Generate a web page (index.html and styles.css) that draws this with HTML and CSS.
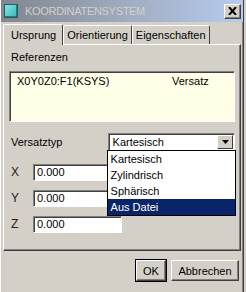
FILE: index.html
```html
<!DOCTYPE html>
<html lang="de">
<head>
    <meta charset="UTF-8">
    <title>Koordinatensystem</title>
    <link rel="stylesheet" href="styles.css">
</head>
<body>
    <div class="window">
        <div class="titlebar">
            <span class="app-icon"></span>
            <span class="title">KOORDINATENSYSTEM</span>
            <button class="close-btn">
                <svg width="9" height="8" viewBox="0 0 9 8"><path d="M1 0 L8 8 M8 0 L1 8" stroke="#000" stroke-width="2"/></svg>
            </button>
        </div>

        <div class="tabs">
            <div class="tab active">Ursprung</div>
            <div class="tab">Orientierung</div>
            <div class="tab">Eigenschaften</div>
        </div>

        <div class="panel">
            <div class="label">Referenzen</div>
            <div class="listbox">
                <div class="list-row">
                    <span class="ref-name">X0Y0Z0:F1(KSYS)</span>
                    <span class="ref-type">Versatz</span>
                </div>
            </div>

            <div class="row type-row">
                <span class="type-label">Versatztyp</span>
                <div class="combo">
                    <span class="combo-value">Kartesisch</span>
                    <span class="combo-btn">
                        <svg width="7" height="4" viewBox="0 0 7 4"><path d="M0 0 H7 L3.5 4 Z" fill="#000"/></svg>
                    </span>
                    <ul class="combo-list">
                        <li>Kartesisch</li>
                        <li>Zylindrisch</li>
                        <li>Sphärisch</li>
                        <li class="selected">Aus Datei</li>
                    </ul>
                </div>
            </div>

            <div class="coords">
                <div class="row coord-row">
                    <span class="axis">X</span>
                    <div class="field">0.000</div>
                </div>
                <div class="row coord-row">
                    <span class="axis">Y</span>
                    <div class="field">0.000</div>
                </div>
                <div class="row coord-row">
                    <span class="axis">Z</span>
                    <div class="field">0.000</div>
                </div>
            </div>
        </div>

        <div class="buttons">
            <button class="btn ok-btn">OK</button>
            <button class="btn cancel-btn">Abbrechen</button>
        </div>
    </div>
</body>
</html>
```

FILE: styles.css
```css
body {
    margin: 0;
    padding: 0;
    background: #d4d0c8;
    font-family: "Liberation Sans", Arial, sans-serif;
    font-size: 11px;
    color: #000;
}

.window {
    width: 242px;
    height: 292px;
    background: #d4d0c8;
    border-left: 1px solid #fff;
    border-right: 1px solid #404040;
    box-shadow: inset -1px 0 0 #808080;
    overflow: hidden;
}

.titlebar {
    height: 22px;
    display: flex;
    align-items: center;
    padding: 0 2px 0 3px;
    background: linear-gradient(to right, #80868f, #9eabbf 50%, #b8cbee);
}

.app-icon {
    width: 12px;
    height: 12px;
    background: linear-gradient(135deg, #7fe8e8, #3cb4b8);
    border: 1px solid #2a5a60;
    box-shadow: inset -1px -1px 0 #1f7d80;
}

.title {
    flex: 1;
    margin-left: 7px;
    color: #d4d0c8;
    font-size: 11px;
    letter-spacing: -0.3px;
}

.close-btn {
    width: 17px;
    height: 15px;
    padding: 0;
    border: 1px solid;
    border-color: #fff #404040 #404040 #fff;
    box-shadow: inset -1px -1px 0 #808080;
    background: #d4d0c8;
    display: flex;
    align-items: center;
    justify-content: center;
}

.tabs {
    display: flex;
    align-items: flex-end;
    height: 22px;
    padding-left: 2px;
}

.tab {
    height: 18px;
    line-height: 18px;
    padding: 0 3px;
    border: 1px solid;
    border-bottom: none;
    border-color: #fff #404040 transparent #fff;
    border-radius: 2px 2px 0 0;
}

.tab.active {
    height: 20px;
    line-height: 20px;
    padding: 0 6px 0 7px;
    position: relative;
    top: 1px;
    background: #d4d0c8;
    z-index: 1;
}

.panel {
    height: 199px;
    margin: 0 2px;
    padding: 6px 5px 0 5px;
    border: 1px solid;
    border-color: #fff #404040 #404040 #fff;
    box-shadow: inset -1px -1px 0 #808080;
}

.label {
    padding-left: 2px;
    height: 20px;
}

.listbox {
    height: 49px;
    background: #ffffe7;
    border: 1px solid;
    border-color: #808080 #fff #fff #808080;
    box-shadow: inset 1px 1px 0 #404040;
}

.list-row {
    display: flex;
    padding: 3px 0 0 7px;
}

.ref-name {
    width: 155px;
}

.row {
    display: flex;
    align-items: center;
}

.type-row {
    margin-top: 11px;
    height: 18px;
}

.type-label {
    width: 97px;
    padding-left: 2px;
}

.combo {
    position: relative;
    width: 126px;
    height: 16px;
    display: flex;
    align-items: center;
    background: #fff;
    border: 1px solid;
    border-color: #808080 #fff #fff #808080;
    box-shadow: inset 1px 1px 0 #404040;
}

.combo-value {
    flex: 1;
    padding-left: 4px;
}

.combo-btn {
    width: 14px;
    height: 12px;
    margin-right: 1px;
    background: #d4d0c8;
    border: 1px solid;
    border-color: #fff #404040 #404040 #fff;
    display: flex;
    align-items: center;
    justify-content: center;
}

.combo-list {
    position: absolute;
    top: 16px;
    left: -2px;
    width: 127px;
    margin: 0;
    padding: 0;
    list-style: none;
    background: #fff;
    border: 1px solid #000;
    z-index: 2;
}

.combo-list li {
    height: 16px;
    line-height: 16px;
    padding-left: 3px;
}

.combo-list li.selected {
    background: #0a246a;
    color: #fff;
}

.coords {
    margin-top: 8px;
}

.coord-row {
    height: 26px;
}

.axis {
    width: 22px;
    padding-left: 2px;
    color: #222;
    font-size: 12px;
}

.field {
    width: 84px;
    height: 15px;
    line-height: 15px;
    padding-left: 3px;
    background: #fff;
    border: 1px solid;
    border-color: #808080 #fff #fff #808080;
    box-shadow: inset 1px 1px 0 #404040;
}

.buttons {
    display: flex;
    justify-content: flex-end;
    gap: 5px;
    padding: 9px 4px 0 0;
}

.btn {
    height: 21px;
    padding: 0;
    font-family: "Liberation Sans", Arial, sans-serif;
    font-size: 11px;
    background: #d4d0c8;
    border: 1px solid;
    border-color: #fff #404040 #404040 #fff;
    box-shadow: inset -1px -1px 0 #808080;
}

.ok-btn {
    width: 30px;
    outline: 1px solid #000;
}

.cancel-btn {
    width: 68px;
}
```
